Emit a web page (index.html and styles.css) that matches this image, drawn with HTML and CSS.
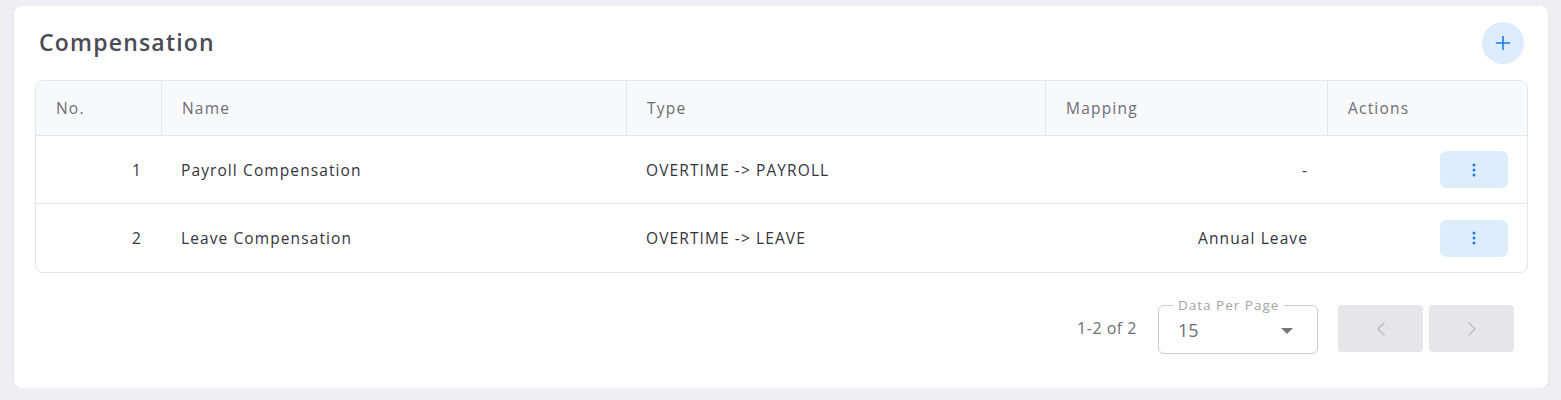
FILE: index.html
```html
<!DOCTYPE html>
<html>
<head>
<meta charset="utf-8">
<link rel="stylesheet" href="styles.css">
</head>
<body>
<div class="card">
  <div class="card-head">
    <h1 class="title">Compensation</h1>
    <button class="add-btn" aria-label="Add">
      <svg width="16" height="16" viewBox="0 0 16 16"><path d="M8 1.5v13M1.5 8h13" stroke="#1a7cf0" stroke-width="1.6" stroke-linecap="round" fill="none"/></svg>
    </button>
  </div>
  <div class="table">
    <div class="row head">
      <div class="cell">No.</div>
      <div class="cell">Name</div>
      <div class="cell">Type</div>
      <div class="cell">Mapping</div>
      <div class="cell">Actions</div>
    </div>
    <div class="row body">
      <div class="cell num">1</div>
      <div class="cell">Payroll Compensation</div>
      <div class="cell">OVERTIME -&gt; PAYROLL</div>
      <div class="cell right">-</div>
      <div class="cell right"><button class="kebab" aria-label="Actions"><svg width="4" height="14" viewBox="0 0 4 14"><circle cx="2" cy="2" r="1.5" fill="#1a7cf0"/><circle cx="2" cy="7" r="1.5" fill="#1a7cf0"/><circle cx="2" cy="12" r="1.5" fill="#1a7cf0"/></svg></button></div>
    </div>
    <div class="row body last">
      <div class="cell num">2</div>
      <div class="cell">Leave Compensation</div>
      <div class="cell">OVERTIME -&gt; LEAVE</div>
      <div class="cell right">Annual Leave</div>
      <div class="cell right"><button class="kebab" aria-label="Actions"><svg width="4" height="14" viewBox="0 0 4 14"><circle cx="2" cy="2" r="1.5" fill="#1a7cf0"/><circle cx="2" cy="7" r="1.5" fill="#1a7cf0"/><circle cx="2" cy="12" r="1.5" fill="#1a7cf0"/></svg></button></div>
    </div>
  </div>
  <div class="pager">
    <span class="range">1-2 of 2</span>
    <div class="select">
      <span class="legend">Data Per Page</span>
      <span class="value">15</span>
      <svg class="caret" width="12" height="6" viewBox="0 0 12 6"><path d="M0 0h12L6 6z" fill="#77777f"/></svg>
    </div>
    <div class="nav">
      <button class="nav-btn" aria-label="Previous"><svg width="8" height="14" viewBox="0 0 8 14"><path d="M7 1L1 7l6 6" stroke="#bdbdc3" stroke-width="1.5" fill="none" stroke-linecap="round" stroke-linejoin="round"/></svg></button>
      <button class="nav-btn" aria-label="Next"><svg width="8" height="14" viewBox="0 0 8 14"><path d="M1 1l6 6-6 6" stroke="#bdbdc3" stroke-width="1.5" fill="none" stroke-linecap="round" stroke-linejoin="round"/></svg></button>
    </div>
  </div>
</div>
</body>
</html>
```
FILE: styles.css
```css
* { box-sizing: border-box; }
html, body { margin: 0; }
body {
  background: #efeff3;
  font-family: "Open Sans", "Noto Sans", sans-serif;
  color: #34343e;
  padding: 6px 13px 0 14px;
}
button { font: inherit; border: 0; cursor: pointer; padding: 0; }
.card {
  background: #fff;
  border-radius: 8px;
  box-shadow: 0 1px 4px rgba(0,0,0,0.06);
  padding: 16px 20px 35px 21px;
  height: 382px;
}
.card-head {
  display: flex;
  align-items: center;
  justify-content: space-between;
  height: 42px;
  margin-bottom: 16px;
  padding-left: 4px;
}
.title {
  margin: 0;
  font-size: 23px;
  font-weight: 600;
  color: #4b4b55;
  letter-spacing: 1.2px;
  margin-top: -2px;
}
.add-btn {
  width: 42px; height: 42px;
  border-radius: 50%;
  background: #ddebfc;
  display: flex; align-items: center; justify-content: center;
  margin-right: 4px;
}
.table {
  border: 1px solid #e4e4e9;
  border-radius: 8px;
  overflow: hidden;
}
.row {
  display: grid;
  grid-template-columns: 125px 465px 419px 282px 1fr;
}
.row.head {
  background: #f8f9fb;
  height: 55px;
  color: #6d6d76;
  border-bottom: 1px solid #e4e4e9;
}
.row.head .cell { border-left: 1px solid #e6e6eb; }
.row.head .cell:first-child { border-left: 0; }
.row.body { height: 68px; border-bottom: 1px solid #e4e4e9; }
.row.body.last { border-bottom: 0; }
.cell {
  display: flex;
  align-items: center;
  padding: 0 20px;
  font-size: 15.5px;
  letter-spacing: 1.1px;
  white-space: nowrap;
}
.row.head .cell { padding-left: 20px; font-size: 15.5px; letter-spacing: 1.2px; }
.cell.num, .cell.right { justify-content: flex-end; padding-right: 19px; }
.kebab {
  width: 68px; height: 37px;
  background: #deedfc;
  border-radius: 6px;
  display: flex; align-items: center; justify-content: center;
}
.pager {
  display: flex;
  align-items: center;
  justify-content: flex-end;
  margin-top: 32px;
  padding-right: 14px;
}
.range {
  font-size: 16px;
  color: #6d6d76;
  margin-right: 21px;
  letter-spacing: 0.5px;
  margin-top: -3px;
}
.select {
  position: relative;
  width: 160px; height: 49px;
  border: 1px solid #c9c9ce;
  border-radius: 6px;
  display: flex; align-items: center;
  padding: 0 24px 0 19px;
}
.legend {
  position: absolute;
  top: -9px; left: 14px;
  background: #fff;
  padding: 0 5px;
  font-size: 13.5px;
  letter-spacing: 1px;
  color: #a3a3aa;
  line-height: 16px;
}
.value { font-size: 18px; color: #6d6d76; flex: 1; }
.caret { margin-top: 2px; }
.nav { display: flex; gap: 6px; margin-left: 20px; }
.nav-btn {
  width: 85px; height: 47px;
  background: #e6e6e9;
  border-radius: 4px;
  display: flex; align-items: center; justify-content: center;
  margin-top: -2px;
}
```
